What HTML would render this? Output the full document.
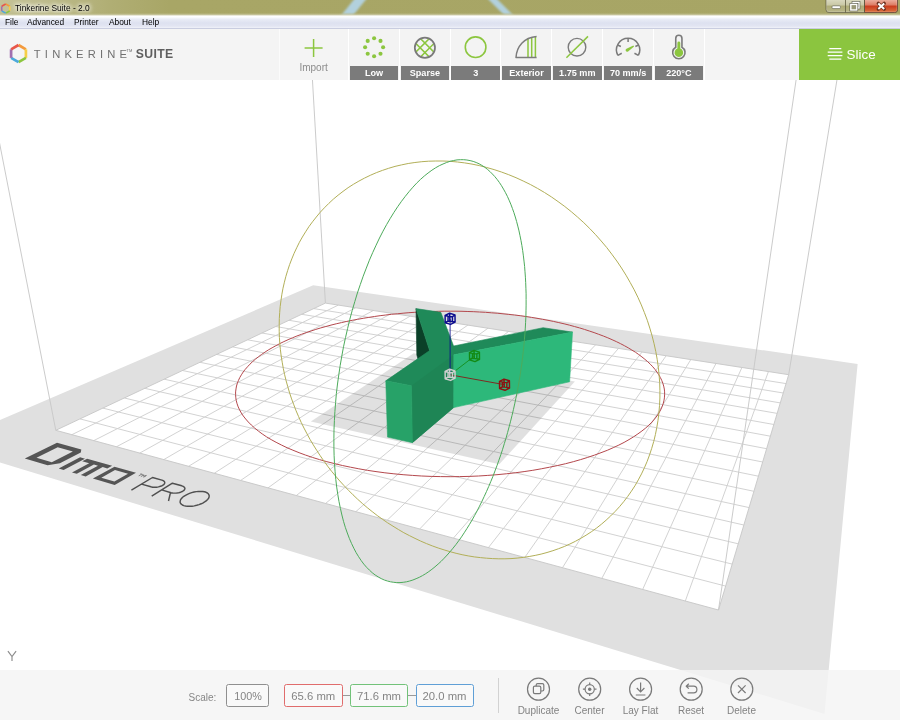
<!DOCTYPE html>
<html><head><meta charset="utf-8"><title>Tinkerine Suite - 2.0</title>
<style>
*{box-sizing:border-box;margin:0;padding:0}
html,body{width:900px;height:720px;overflow:hidden;background:#fff;font-family:"Liberation Sans",sans-serif}
#scene{position:absolute;left:0;top:0;width:900px;height:720px}
#title{position:absolute;left:0;top:0;width:900px;height:15px;background:linear-gradient(to right,#c4c297 0,#bcba8a 50px,#b0ae74 110px,#a8a666 170px,#a7a565 100%);overflow:hidden}
#title .t{position:absolute;left:15px;top:1px;font-size:8.4px;line-height:14px;color:#000;text-shadow:0 0 4px #fff,0 0 4px #fff,0 0 6px #fff}
#menu{position:absolute;left:0;top:15px;width:900px;height:14px;background:linear-gradient(#d8d7ba 0,#ffffff 7%,#fcfdfe 16%,#e9ecf6 32%,#dde1f0 62%,#e2e5f2 85%,#eff1f8 100%);border-bottom:1px solid #c9cde0}
#menu span{position:absolute;top:1.2px;font-size:8.35px;line-height:13px;color:#000}
#tb{position:absolute;left:0;top:29px;width:799px;height:51px;background:#f4f4f4}
.cell{position:absolute;top:0;height:51px;width:50.8px;background:#f3f3f3;border-left:1px solid #fff}
.lab{position:absolute;top:36.5px;height:14px;background:#7b7b7b;color:#fff;font-weight:bold;font-size:9.1px;line-height:14.5px;text-align:center;white-space:nowrap}
#slice{position:absolute;left:799px;top:29px;width:101px;height:51px;background:#8bc53f}
#bb{position:absolute;left:0;top:670px;width:900px;height:50px;background:rgba(244,244,244,0.84)}
.box{position:absolute;top:14.4px;height:22.2px;border:1px solid #8f8f8f;border-radius:2.5px;font-size:11.3px;line-height:22.8px;text-align:center;color:#848484;background:rgba(255,255,255,0.35)}
.bl{position:absolute;top:34.5px;font-size:10px;line-height:12px;color:#828282;text-align:center;width:60px}
#title .t,#menu span,#tb div,#slice div,#bb div{opacity:0.999}
</style></head><body>
<svg id="scene" viewBox="0 0 900 720">
<polygon points="-57.8,444.8 824.5,713.9 857.6,363.9 313.2,285.3" fill="#e0e0e0" />
<polygon points="55.8,430.3 718.5,610 788.7,374.7 325.4,303.1" fill="#ffffff" />
<path d="M71.8 434.7L338.3 305.1M93.8 440.6L355.7 307.8M116.4 446.8L373.4 310.5M139.7 453.1L391.6 313.3M163.8 459.6L410.1 316.2M188.6 466.3L428.9 319.1M214.2 473.3L448.2 322.1M240.7 480.4L467.9 325.1M268 487.9L488 328.2M296.3 495.5L508.6 331.4M325.5 503.5L529.6 334.7M355.8 511.7L551.1 338M387.2 520.2L573.1 341.4M419.7 529L595.5 344.9M453.4 538.1L618.5 348.4M488.4 547.6L642 352.1M524.7 557.5L666.1 355.8M562.5 567.7L690.8 359.6M601.8 578.4L716 363.5M642.7 589.4L741.9 367.5M685.3 601L768.4 371.6M80 418.9L725.6 586.1M102.8 408.1L732.2 564.1M124.4 398L738.2 543.8M144.8 388.3L743.8 525M164.1 379.2L749.1 507.6M182.5 370.5L753.9 491.3M200 362.3L758.4 476.2M216.6 354.4L762.7 462M232.5 346.9L766.6 448.7M247.6 339.8L770.4 436.2M262 333L773.9 424.5M275.8 326.5L777.2 413.4M289 320.3L780.3 402.9M301.7 314.3L783.3 393M313.8 308.6L786.1 383.6" stroke="#d0d0d0" stroke-width="0.95" fill="none"/>
<path d="M55.8 430.3L718.5 610M55.8 430.3L-109.3 -412.8M-109.3 -412.8L920.9 -772.9M718.5 610L788.7 374.7M718.5 610L920.9 -772.9M920.9 -772.9L903.7 -327.7M788.7 374.7L325.4 303.1M788.7 374.7L903.7 -327.7M903.7 -327.7L294.4 -231.1M325.4 303.1L55.8 430.3M325.4 303.1L294.4 -231.1M294.4 -231.1L-109.3 -412.8" stroke="#c8c8c8" stroke-width="0.95" fill="none"/>
<path d="M24.8 458.4L57 442.7L81.3 449.5L80.8 452.6L59.9 463.3L47.6 465.2ZM36.5 457.8L57.7 447.3L72.9 451.6L51.8 462.3ZM58.7 468.5L80.1 457.3L85 458.7L63.6 469.9ZM87.1 458.7L112.1 465.8L107.3 468.4L102.7 467.1L85.7 476.5L80.8 475L98 465.8L93.9 464.6L76.8 473.8L72 472.4L89.2 463.3L82.2 461.2ZM92.9 478.6L114.5 466.7L136 472.8L114.7 485.1ZM101.3 477.7L115 470L128 473.7L114.4 481.6Z" fill="#555" fill-rule="evenodd"/>
<path d="M140.4 473.8L142.9 474.5M141.7 474.2L138.7 475.9M140.9 476.6L143.9 474.8L143.4 476.2L146.4 475.5L143.5 477.3" fill="none" stroke="#666" stroke-width="0.75" stroke-linejoin="round"/>
<path d="M131.4 490.1L152.5 477.5L161.9 480.1L161.9 480.1L163.2 480.7L164.2 481.4L164.7 482.2L164.7 483.1L164.3 484L163.4 484.9L162.1 485.7L160.4 486.3L158.5 486.9L156.5 487.2L154.5 487.3L152.6 487.2L150.9 486.8L141.5 484.1M151.7 496.1L172.4 483.2L181.8 485.8L181.8 485.8L183.2 486.4L184.2 487.1L184.8 487.9L184.9 488.8L184.4 489.7L183.6 490.7L182.3 491.5L180.6 492.2L178.8 492.7L176.7 493L174.7 493.1L172.8 493L171.1 492.7L161.6 489.9M170.5 492.5L168.5 501M205 501.7L206.5 500.6L207.7 499.4L208.6 498.2L209.1 497L209.2 495.8L208.9 494.8L208.3 493.8L207.4 493L206.1 492.3L204.5 491.8L202.7 491.5L200.7 491.4L198.5 491.4L196.3 491.6L194 492L191.7 492.6L189.5 493.4L187.4 494.3L185.5 495.3L183.8 496.3L182.4 497.5L181.3 498.7L180.5 499.9L180.2 501.1L180.1 502.2L180.5 503.3L181.3 504.2L182.4 505L183.8 505.6L185.5 506L187.5 506.3L189.7 506.3L192 506.2L194.3 505.9L196.7 505.3L199 504.6L201.2 503.8L203.2 502.8L205 501.7Z" fill="none" stroke="#505050" stroke-width="1.45" stroke-linejoin="round"/>
<polygon points="310.8,421.6 499.3,464.2 574.9,381.4 413.7,353.2" fill="#000" fill-opacity="0.12"/>
<path d="M658.9 413.0L660.6 410.0L662.0 406.9L663.1 403.9L663.9 400.9L664.4 397.9L664.6 394.9L664.6 391.9L664.3 389.0L663.7 386.1L662.8 383.2L661.7 380.3L660.4 377.6L658.8 374.8L657.0 372.1L655.0 369.4L652.8 366.8L650.3 364.2L647.7 361.7L644.9 359.3L641.9 356.9L638.7 354.5L635.4 352.2L631.8 350.0L628.2 347.8L624.4 345.7L620.4 343.6L616.3 341.6L612.1 339.7L607.8 337.8L603.3 336.0L598.7 334.3L594.1 332.6L589.3 331.0L584.4 329.4L579.5 327.9L574.4 326.5L569.3 325.1L564.1 323.8L558.8 322.6L553.4 321.4L548.0 320.3L542.6 319.3L537.0 318.3L531.5 317.4L525.9 316.5L520.2 315.7L514.5 315.0L508.8 314.4L503.0 313.8L497.2 313.2L491.4 312.8L485.5 312.3L479.6 312.0L473.8 311.7L467.9 311.5L462.0 311.3L456.0 311.2L450.1 311.2L444.2 311.2L438.3 311.3L432.4 311.5L426.5 311.7L420.6 312.0L414.8 312.3L408.9 312.7L403.1 313.2L397.3 313.8L391.5 314.3L385.8 315.0L380.1 315.7L374.4 316.5L368.8 317.4L363.2 318.3L357.7 319.3L352.2 320.3L346.8 321.4L341.5 322.6L336.2 323.8L331.0 325.1L325.9 326.5L320.8 327.9L315.8 329.4L311.0 331.0L306.2 332.6L301.5 334.3L296.9 336.0L292.5 337.8L288.1 339.7L283.9 341.6L279.8 343.6L275.9 345.7L272.1 347.8L268.4 349.9L264.9 352.2L261.5 354.5L258.4 356.8L255.4 359.2L252.5 361.7L249.9 364.2L247.5 366.8L245.2 369.4L243.2 372.0L241.4 374.8L239.8 377.5L238.5 380.3L237.4 383.1L236.5 386.0L236.0 388.9L235.6 391.9L235.6 394.8L235.8 397.8L236.3 400.8L237.1 403.8L238.2 406.9L239.6 409.9L241.3 413.0L243.3 416.0L245.7 419.0L248.3 422.0L251.3 425.0L254.6 428.0L258.3 431.0L262.2 433.9L266.5 436.8L271.2 439.6L276.1 442.3L281.4 445.0L287.0 447.7L292.9 450.2L299.1 452.7L305.6 455.1L312.4 457.4L319.5 459.6L326.9 461.7L334.5 463.6L342.4 465.5L350.5 467.2L358.8 468.8L367.3 470.3L376.0 471.6L384.9 472.8L393.9 473.8L403.1 474.7L412.4 475.4L421.7 476.0L431.1 476.4L440.6 476.6L450.1 476.7L459.5 476.6L469.0 476.4L478.4 476.0L487.8 475.4L497.0 474.7L506.2 473.8L515.2 472.8L524.1 471.6L532.8 470.3L541.3 468.8L549.6 467.2L557.7 465.5L565.6 463.7L573.3 461.7L580.6 459.6L587.7 457.4L594.5 455.1L601.0 452.7L607.3 450.3L613.2 447.7L618.8 445.1L624.1 442.4L629.0 439.6L633.6 436.8L637.9 433.9L641.9 431.0L645.6 428.1L648.9 425.1L651.9 422.1L654.5 419.1L656.9 416.0L658.9 413.0Z" stroke="#b4484d" stroke-width="1.0" fill="none"/>
<path d="M658.9 413.0L659.5 405.6L659.9 398.0L659.9 390.4L659.7 382.8L659.1 375.0L658.3 367.2L657.2 359.4L655.8 351.6L654.1 343.8L652.1 335.9L649.8 328.1L647.3 320.3L644.4 312.6L641.3 304.9L637.9 297.3L634.2 289.8L630.2 282.5L626.0 275.2L621.5 268.0L616.8 261.0L611.8 254.2L606.7 247.5L601.2 241.0L595.6 234.7L589.8 228.6L583.8 222.7L577.6 217.1L571.3 211.7L564.8 206.5L558.1 201.6L551.4 196.9L544.5 192.5L537.5 188.4L530.4 184.5L523.2 181.0L516.0 177.7L508.7 174.7L501.4 172.0L494.1 169.6L486.7 167.5L479.3 165.6L472.0 164.1L464.7 162.9L457.4 162.0L450.1 161.3L442.9 161.0L435.8 161.0L428.7 161.2L421.8 161.7L414.9 162.5L408.2 163.5L401.5 164.9L395.0 166.4L388.6 168.3L382.4 170.4L376.3 172.7L370.3 175.3L364.5 178.1L358.9 181.1L353.4 184.3L348.1 187.7L343.0 191.4L338.1 195.2L333.3 199.2L328.8 203.4L324.4 207.8L320.2 212.3L316.3 217.0L312.5 221.8L308.9 226.7L305.6 231.8L302.4 237.0L299.4 242.3L296.7 247.8L294.1 253.3L291.8 258.9L289.6 264.6L287.7 270.4L285.9 276.3L284.4 282.2L283.0 288.2L281.9 294.2L281.0 300.3L280.2 306.4L279.7 312.6L279.3 318.7L279.2 324.9L279.2 331.2L279.4 337.4L279.8 343.6L280.4 349.8L281.2 356.0L282.2 362.2L283.3 368.4L284.6 374.6L286.1 380.7L287.8 386.8L289.6 392.9L291.6 398.9L293.8 404.8L296.1 410.8L298.6 416.6L301.2 422.4L304.0 428.1L307.0 433.8L310.0 439.4L313.3 444.9L316.7 450.3L320.2 455.7L323.8 460.9L327.6 466.1L331.5 471.2L335.6 476.1L339.8 481.0L344.1 485.7L348.5 490.3L353.0 494.8L357.6 499.2L362.4 503.5L367.2 507.6L372.2 511.6L377.2 515.5L382.4 519.2L387.6 522.8L393.0 526.2L398.4 529.5L403.8 532.7L409.4 535.6L415.0 538.4L420.7 541.1L426.5 543.6L432.3 545.9L438.2 548.0L444.1 549.9L450.1 551.7L456.1 553.3L462.1 554.7L468.2 555.9L474.3 556.9L480.4 557.6L486.5 558.2L492.7 558.6L498.8 558.8L504.9 558.8L511.0 558.6L517.1 558.1L523.2 557.4L529.2 556.5L535.2 555.4L541.1 554.1L547.0 552.5L552.9 550.7L558.6 548.7L564.3 546.5L569.9 544.0L575.4 541.3L580.8 538.3L586.1 535.2L591.3 531.8L596.4 528.2L601.3 524.3L606.1 520.2L610.7 515.9L615.2 511.4L619.5 506.7L623.7 501.7L627.6 496.6L631.4 491.2L635.0 485.7L638.3 479.9L641.5 473.9L644.4 467.8L647.1 461.5L649.5 455.0L651.7 448.4L653.7 441.6L655.4 434.6L656.8 427.5L658.0 420.3L658.9 413.0Z" stroke="#b2af58" stroke-width="1.0" fill="none"/>
<polygon points="429.6,350.6 416,308.6 416.8,354.9 430.1,402.9" fill="#0b4028" stroke="#0b4028" stroke-width="0.6"/>
<polygon points="385.8,380.8 429.6,350.6 416,308.6 440.8,312.3 453.6,346 543.1,327.7 572.5,332.1 453.8,354.8 453.7,407.6 412.4,442.7 411.4,385.7" fill="#1f8a59" stroke="#1f8a59" stroke-width="0.6"/>
<polygon points="411.4,385.7 453.8,354.8 453.7,407.6 412.4,442.7" fill="#1e8555" />
<polygon points="385.8,380.8 411.4,385.7 412.4,442.7 387.5,437.1" fill="#27a268" stroke="#27a268" stroke-width="0.6"/>
<polygon points="453.8,354.8 572.5,332.1 569.6,381.8 453.7,407.6" fill="#2db87a" stroke="#2db87a" stroke-width="0.6"/>
<path d="M525.9 316.5L526.0 310.8L526.1 305.1L526.1 299.4L526.1 293.8L525.9 288.2L525.7 282.7L525.4 277.2L525.0 271.8L524.6 266.4L524.0 261.1L523.4 255.9L522.7 250.7L521.9 245.6L521.0 240.6L520.0 235.7L519.0 230.9L517.8 226.1L516.6 221.5L515.3 217.0L513.9 212.6L512.4 208.4L510.8 204.2L509.1 200.2L507.4 196.4L505.5 192.7L503.5 189.1L501.5 185.7L499.4 182.5L497.2 179.5L494.8 176.6L492.4 174.0L489.9 171.5L487.4 169.3L484.7 167.2L481.9 165.4L479.1 163.8L476.2 162.5L473.2 161.4L470.1 160.6L466.9 160.0L463.7 159.7L460.4 159.7L457.0 159.9L453.6 160.5L450.1 161.3L446.6 162.5L443.0 164.0L439.3 165.7L435.6 167.8L431.9 170.2L428.1 173.0L424.3 176.0L420.5 179.4L416.7 183.1L412.9 187.2L409.1 191.6L405.3 196.3L401.5 201.3L397.7 206.7L394.0 212.3L390.3 218.3L386.6 224.6L383.0 231.2L379.5 238.0L376.1 245.2L372.7 252.6L369.4 260.2L366.3 268.1L363.2 276.2L360.3 284.5L357.4 293.0L354.8 301.6L352.2 310.5L349.8 319.4L347.6 328.5L345.5 337.6L343.5 346.8L341.8 356.1L340.2 365.4L338.8 374.7L337.5 384.0L336.4 393.3L335.6 402.5L334.9 411.6L334.4 420.6L334.0 429.5L333.9 438.3L333.9 446.9L334.1 455.4L334.5 463.6L335.1 471.7L335.8 479.5L336.7 487.1L337.8 494.5L339.0 501.6L340.4 508.4L341.9 515.0L343.5 521.3L345.3 527.3L347.3 533.0L349.3 538.3L351.5 543.4L353.8 548.2L356.1 552.6L358.6 556.7L361.2 560.6L363.8 564.1L366.6 567.3L369.4 570.1L372.2 572.7L375.2 575.0L378.2 576.9L381.2 578.6L384.3 580.0L387.4 581.0L390.5 581.8L393.7 582.3L396.8 582.6L400.0 582.6L403.2 582.3L406.5 581.8L409.7 581.0L412.9 580.0L416.1 578.7L419.3 577.3L422.5 575.6L425.7 573.7L428.8 571.6L431.9 569.3L435.0 566.8L438.1 564.1L441.2 561.3L444.2 558.2L447.2 555.0L450.1 551.7L453.0 548.2L455.9 544.6L458.7 540.8L461.5 536.9L464.2 532.8L466.9 528.6L469.5 524.4L472.1 520.0L474.6 515.5L477.1 510.9L479.5 506.2L481.9 501.4L484.2 496.5L486.5 491.5L488.7 486.5L490.9 481.3L493.0 476.2L495.0 470.9L497.0 465.6L498.9 460.2L500.8 454.8L502.6 449.3L504.3 443.7L506.0 438.2L507.6 432.5L509.1 426.9L510.6 421.2L512.0 415.5L513.4 409.7L514.7 403.9L515.9 398.2L517.1 392.3L518.2 386.5L519.2 380.7L520.2 374.8L521.0 369.0L521.9 363.1L522.6 357.2L523.3 351.4L523.9 345.5L524.4 339.7L524.9 333.9L525.3 328.1L525.6 322.3L525.9 316.5Z" stroke="#4dab5b" stroke-width="1.0" fill="none"/>
<line x1="450.1" y1="374.8" x2="504.5" y2="384.7" stroke="#8b1212" stroke-width="0.85"/>
<line x1="450.1" y1="374.8" x2="474.5" y2="356" stroke="#138a13" stroke-width="0.85"/>
<line x1="450.1" y1="374.8" x2="450.1" y2="318.8" stroke="#0c0c8e" stroke-width="0.85"/>
<path d="M504 379.1L509.4 380.8L509.5 388L505 390.3L499.6 388.6L499.5 381.4ZM502.5 382.1L506.9 382.6L506.8 387.4L502.4 386.9ZM504 379.1L504.3 387.1M499.5 381.4L502.5 382.1M509.4 380.8L506.9 382.6M499.6 388.6L502.4 386.9M509.5 388L506.8 387.4" stroke="#8b1212" stroke-width="1.45" fill="none" stroke-linejoin="round"/>
<path d="M474 350.4L479.4 352.1L479.5 359.3L475 361.6L469.6 359.9L469.5 352.7ZM472.5 353.4L476.9 353.9L476.8 358.7L472.4 358.2ZM474 350.4L474.3 358.4M469.5 352.7L472.5 353.4M479.4 352.1L476.9 353.9M469.6 359.9L472.4 358.2M479.5 359.3L476.8 358.7" stroke="#138a13" stroke-width="1.45" fill="none" stroke-linejoin="round"/>
<path d="M449.6 313.2L455 314.9L455.1 322.1L450.6 324.4L445.2 322.7L445.1 315.5ZM448.1 316.2L452.5 316.7L452.4 321.5L448 321ZM449.6 313.2L449.9 321.2M445.1 315.5L448.1 316.2M455 314.9L452.5 316.7M445.2 322.7L448 321M455.1 322.1L452.4 321.5" stroke="#0c0c8e" stroke-width="1.45" fill="none" stroke-linejoin="round"/>
<path d="M449.6 369.2L455 370.9L455.1 378.1L450.6 380.4L445.2 378.7L445.1 371.5ZM448.1 372.2L452.5 372.7L452.4 377.5L448 377ZM449.6 369.2L449.9 377.2M445.1 371.5L448.1 372.2M455 370.9L452.5 372.7M445.2 378.7L448 377M455.1 378.1L452.4 377.5" stroke="#cfcfcf" stroke-width="1.45" fill="none" stroke-linejoin="round"/>
</svg>
<svg width="30" height="20" style="position:absolute;left:0;top:645px"><path d="M7.9 6.2L12 11.6L16.1 6.2M12 11.6V16" stroke="#8c8c8c" stroke-width="1.15" fill="none"/></svg>

<div id="title">
<svg width="900" height="15" style="position:absolute;left:0;top:0">
<defs><filter id="bl" x="-30%" y="-30%" width="160%" height="160%"><feGaussianBlur stdDeviation="1.3"/></filter></defs>
<g filter="url(#bl)" opacity="0.9"><polygon points="356,-3 368,-3 351,18 339,18" fill="#b4d6ea"/>
<polygon points="486,-3 495,-3 516,18 507,18" fill="#b4d6ea"/></g>
</svg>
<svg width="14" height="15" style="position:absolute;left:0;top:0" fill="none" stroke-width="1.6"><g transform="translate(5.7,8.6)"><path d="M0 -4.6L4 -2.3" stroke="#f39a3c"/><path d="M4 -2.3L4 2.3" stroke="#f6cf47"/><path d="M4 2.3L0 4.6" stroke="#8cc63f"/><path d="M0 4.6L-4 2.3" stroke="#4aa9dc"/><path d="M-4 2.3L-4 -2.3" stroke="#a06fb0"/><path d="M-4 -2.3L0 -4.6" stroke="#e8574a"/></g></svg>
<div class="t">Tinkerine Suite - 2.0</div>
</div>
<div id="menu"><span style="left:5px">File</span><span style="left:27px">Advanced</span><span style="left:74px">Printer</span><span style="left:109px">About</span><span style="left:142px">Help</span></div>

<div id="tb">
 <div class="cell" style="left:348.0px"></div><div class="cell" style="left:398.8px"></div><div class="cell" style="left:449.6px"></div><div class="cell" style="left:500.4px"></div><div class="cell" style="left:551.2px"></div><div class="cell" style="left:602.0px"></div><div class="cell" style="left:652.8px;border-right:1px solid #fff;width:51.8px"></div>
 <div style="position:absolute;left:279px;top:0;width:1px;height:51px;background:#fbfbfb"></div>
 <div class="lab" style="left:349.8px;width:48.6px">Low</div>
 <div class="lab" style="left:400.6px;width:48.6px">Sparse</div>
 <div class="lab" style="left:451.4px;width:48.6px">3</div>
 <div class="lab" style="left:502.2px;width:48.6px">Exterior</div>
 <div class="lab" style="left:553.0px;width:48.6px">1.75 mm</div>
 <div class="lab" style="left:603.8px;width:48.6px">70 mm/s</div>
 <div class="lab" style="left:654.6px;width:48.6px">220°C</div>
 <div style="position:absolute;left:283.6px;top:32.5px;width:60px;text-align:center;font-size:10px;line-height:12px;color:#8c8c8c">Import</div>
 <div style="position:absolute;left:33.8px;top:18px;font-size:11.2px;line-height:14px;color:#707070;letter-spacing:4.2px;white-space:nowrap">TINKERINE</div>
 <div style="position:absolute;left:126.6px;top:18.5px;font-size:4px;line-height:6px;color:#6a6a6a">TM</div>
 <div style="position:absolute;left:135.8px;top:18.4px;font-size:12.2px;line-height:14px;color:#5f5f5f;font-weight:bold;letter-spacing:0.35px;white-space:nowrap">SUITE</div>
 <svg width="799" height="51" style="position:absolute;left:0;top:0" fill="none">
  <!-- logo hex -->
  <g transform="translate(18.5,24.6) scale(1.0)" stroke-width="2.7" stroke-linecap="butt">
   <path d="M0 -8.6L7.4 -4.3" stroke="#f39a3c"/>
   <path d="M7.4 -4.3L7.4 4.3" stroke="#f6cf47"/>
   <path d="M7.4 4.3L0 8.6" stroke="#8cc63f"/>
   <path d="M0 8.6L-7.4 4.3" stroke="#4aa9dc"/>
   <path d="M-7.4 4.3L-7.4 -4.3" stroke="#a06fb0"/>
   <path d="M-7.4 -4.3L0 -8.6" stroke="#e8574a"/>
  </g>
  <!-- import plus -->
  <path d="M313.6 10V28M304.6 19H322.6" stroke="#8cc63f" stroke-width="1.5"/>
  <!-- low dots -->
  <g fill="#8cc63f" transform="translate(374.1,18.3)">
   <circle cx="0" cy="-9" r="2.05"/><circle cx="6.4" cy="-6.4" r="2.05"/><circle cx="9" cy="0" r="2.05"/><circle cx="6.4" cy="6.4" r="2.05"/><circle cx="0" cy="9" r="2.05"/><circle cx="-6.4" cy="6.4" r="2.05"/><circle cx="-9" cy="0" r="2.05"/><circle cx="-6.4" cy="-6.4" r="2.05"/>
  </g>
  <!-- sparse -->
  <g transform="translate(424.9,18.8)">
   <clipPath id="cs"><circle r="10"/></clipPath>
   <g clip-path="url(#cs)" stroke="#8cc63f" stroke-width="1.55"><path d="M-12 7.2L7.2 -12M-7.2 12L12 -7.2M-12 -7.2L7.2 12M-7.2 -12L12 7.2"/></g>
   <circle r="10.1" stroke="#7a7a7a" stroke-width="1.7"/>
  </g>
  <!-- 3 shells -->
  <circle cx="475.6" cy="18.2" r="10.3" stroke="#8cc63f" stroke-width="1.6"/>
  <!-- exterior -->
  <path d="M528 9.6V28M531.7 8.4V28M535.4 7.8V28" stroke="#8cc63f" stroke-width="1.5"/>
  <path d="M536.6 7.6C524 8.6 516.6 17.5 516 28.6H536.6" stroke="#7c7c7c" stroke-width="1.5" stroke-linejoin="round"/>
  <!-- filament -->
  <circle cx="577" cy="18.2" r="8.8" stroke="#7c7c7c" stroke-width="1.4"/>
  <path d="M566.4 28.8L588 7.4" stroke="#8cc63f" stroke-width="1.5"/>
  <!-- speed -->
  <g transform="translate(628.1,20.9)" stroke="#7a7a7a" stroke-width="1.5" stroke-linecap="butt">
   <path d="M-10.24 5.45A11.6 11.6 0 1 1 10.24 5.45"/>
   <path d="M0.00 -11.60L0.00 -7.80M10.51 -4.90L7.25 -3.38M-10.51 -4.90L-7.25 -3.38M10.24 5.45L6.36 3.38M-10.24 5.45L-6.36 3.38"/>
   <path d="M-2.3 1.1A1.7 1.7 0 0 1 -1.6 -1.2L5.3 -4.5L6 -3.5L0 1.6A1.7 1.7 0 0 1 -2.3 1.1Z" fill="#8cc63f" stroke="none"/>
  </g>
  <!-- thermometer -->
  <g transform="translate(678.85,0)">
   <path d="M-3.1 18.2V9.4A3.1 3.1 0 0 1 3.1 9.4V18.2A6.2 6.2 0 1 1 -3.1 18.2Z" stroke="#7a7a7a" stroke-width="1.6"/>
   <path d="M-1.45 19.6V14A1.45 1.45 0 0 1 1.45 14V19.6A4.3 4.3 0 1 1 -1.45 19.6Z" fill="#8cc63f"/>
  </g>
 </svg>
</div>
<div id="slice">
 <svg width="101" height="51" style="position:absolute;left:0;top:0"><path d="M30.3 19.7H42.3M28.7 23.2H43.4M28.7 26.7H43.4M30.3 30.2H42.3" stroke="#fff" stroke-width="1.3"/></svg>
 <div style="position:absolute;left:47.6px;top:18.2px;font-size:13.4px;line-height:16px;color:#fff">Slice</div>
</div>

<div id="bb">
 <div style="position:absolute;left:188.6px;top:21.7px;font-size:10px;line-height:12px;color:#868686">Scale:</div>
 <div class="box" style="left:225.6px;width:43px;font-size:10.8px;padding-left:2px">100%</div>
 <div class="box" style="left:284px;width:58.5px;border-color:#e06c6c">65.6 mm</div>
 <div class="box" style="left:350px;width:58px;border-color:#72c279">71.6 mm</div>
 <div class="box" style="left:415.5px;width:58px;border-color:#5f9fd6">20.0 mm</div>
 <div style="position:absolute;left:342.5px;top:25px;width:7.5px;height:1px;background:#999"></div>
 <div style="position:absolute;left:408px;top:25px;width:7.5px;height:1px;background:#999"></div>
 <div style="position:absolute;left:498px;top:8px;width:1px;height:35px;background:#d2d2d2"></div>
 <div class="bl" style="left:508.5px">Duplicate</div>
 <div class="bl" style="left:559.5px">Center</div>
 <div class="bl" style="left:610.5px">Lay Flat</div>
 <div class="bl" style="left:661px">Reset</div>
 <div class="bl" style="left:711.5px">Delete</div>
 <svg width="900" height="50" style="position:absolute;left:0;top:0" fill="none" stroke="#7a7a7a" stroke-width="1.2">
  <circle cx="538.5" cy="19.2" r="11"/><circle cx="589.7" cy="19.2" r="11"/><circle cx="640.6" cy="19.2" r="11"/><circle cx="691.2" cy="19.2" r="11"/><circle cx="741.8" cy="19.2" r="11"/>
  <!-- duplicate -->
  <rect x="533.4" y="16.2" width="7.4" height="7.4" rx="1.4"/><path d="M536.2 16.2V15A1.4 1.4 0 0 1 537.6 13.6H542.4A1.4 1.4 0 0 1 543.8 15V19.6A1.4 1.4 0 0 1 542.4 21H540.8"/>
  <!-- center -->
  <circle cx="589.7" cy="19.2" r="4.6"/><circle cx="589.7" cy="19.2" r="1.7" fill="#7a7a7a" stroke="none"/><path d="M589.7 12.4V14.6M589.7 23.8V26M582.9 19.2H585.1M594.3 19.2H596.5"/>
  <!-- lay flat -->
  <path d="M640.6 12.6V21.6M636.8 18L640.6 21.8L644.4 18M635.8 25H645.4"/>
  <!-- reset -->
  <path d="M686.6 16.2H693.6A3.3 3.3 0 0 1 693.6 22.8H687.6M688.8 13.8L686.2 16.2L688.8 18.6" stroke-linejoin="round"/>
  <!-- delete -->
  <path d="M738 15.4L745.6 23M745.6 15.4L738 23"/>
 </svg>
</div>
<!-- window buttons -->
<svg width="900" height="16" style="position:absolute;left:0;top:0">
 <defs><linearGradient id="wg" x1="0" y1="0" x2="0" y2="1"><stop offset="0" stop-color="#dcdbc2"/><stop offset="0.45" stop-color="#c9c8a6"/><stop offset="0.52" stop-color="#aeac76"/><stop offset="1" stop-color="#b9b78a"/></linearGradient>
 <linearGradient id="rg" x1="0" y1="0" x2="0" y2="1"><stop offset="0" stop-color="#eeb6a6"/><stop offset="0.45" stop-color="#dd7c64"/><stop offset="0.52" stop-color="#c93a1d"/><stop offset="1" stop-color="#dc7442"/></linearGradient>
 <linearGradient id="tbot" x1="0" y1="0" x2="0" y2="1"><stop offset="0" stop-color="#a7a565" stop-opacity="0"/><stop offset="1" stop-color="#d6d5b8" stop-opacity="0.95"/></linearGradient></defs>
 <rect x="0" y="12.2" width="900" height="3" fill="url(#tbot)"/>
 <path d="M826 -1H897.5V9.5A3 3 0 0 1 894.5 12.5H829A3 3 0 0 1 826 9.5Z" fill="url(#wg)" stroke="#5e5c40" stroke-width="0.8"/>
 <path d="M864.5 -1H897.5V9.5A3 3 0 0 1 894.5 12.5H864.5Z" fill="url(#rg)" stroke="#5c3a2c" stroke-width="0.8"/>
 <path d="M826.6 0V9.5A2.4 2.4 0 0 0 829 11.9H894.5A2.4 2.4 0 0 0 896.9 9.5V0" fill="none" stroke="#fff" stroke-opacity="0.35" stroke-width="0.6"/>
 <path d="M845.5 0V12.5M864.5 0V12.5" stroke="#5e5c40" stroke-width="0.8"/>
 <rect x="832" y="5.8" width="8.4" height="2.8" rx="1" fill="#fff" stroke="#6b6b5a" stroke-width="0.7"/>
 <g fill="none"><rect x="853" y="2.4" width="6" height="5.6" stroke="#5a5a4c" stroke-width="2.6"/><rect x="853" y="2.4" width="6" height="5.6" stroke="#fff" stroke-width="1.4"/>
 <rect x="850.8" y="4.4" width="6" height="5.6" fill="#8e8d6c" stroke="#5a5a4c" stroke-width="2.6"/><rect x="850.8" y="4.4" width="6" height="5.6" fill="#9a9978" stroke="#fff" stroke-width="1.4"/></g>
 <path d="M878.3 3.4L884.2 9M884.2 3.4L878.3 9" stroke="#6a3020" stroke-width="3.4" stroke-linecap="round"/>
 <path d="M878.3 3.4L884.2 9M884.2 3.4L878.3 9" stroke="#fff" stroke-width="2"/>
</svg>
</body></html>
